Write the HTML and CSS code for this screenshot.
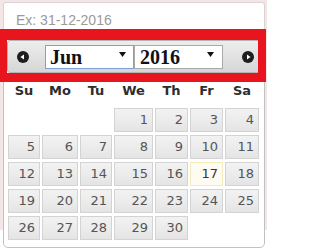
FILE: index.html
```html
<!DOCTYPE html>
<html>
<head>
<meta charset="utf-8">
<link rel="stylesheet" href="styles.css">
</head>
<body>
<div class="page">
  <div class="field"><span class="placeholder">Ex: 31-12-2016</span></div>
  <div class="datepicker">
    <div class="dp-header">
      <div class="nav prev">
        <svg width="12" height="12" viewBox="0 0 12 12"><circle cx="6" cy="6" r="6" fill="#1e1e1e"/><polygon points="3.4,6 7,3.4 7,8.6" fill="#fff"/></svg>
      </div>
      <div class="select focused"><span>Jun</span><svg class="caret" width="7" height="5" viewBox="0 0 7 5"><polygon points="0,0 7,0 3.5,5" fill="#111"/></svg></div>
      <div class="select"><span>2016</span><svg class="caret" width="7" height="5" viewBox="0 0 7 5"><polygon points="0,0 7,0 3.5,5" fill="#111"/></svg></div>
      <div class="nav next">
        <svg width="12" height="12" viewBox="0 0 12 12"><circle cx="6" cy="6" r="6" fill="#1e1e1e"/><polygon points="8.6,6 5,3.4 5,8.6" fill="#fff"/></svg>
      </div>
    </div>
    <div class="cal">
      <div class="dn">Su</div><div class="dn">Mo</div><div class="dn">Tu</div><div class="dn">We</div><div class="dn">Th</div><div class="dn">Fr</div><div class="dn">Sa</div>
      <div class="empty"></div><div class="empty"></div><div class="empty"></div>
      <div class="day">1</div><div class="day">2</div><div class="day">3</div><div class="day">4</div>
      <div class="day">5</div><div class="day">6</div><div class="day">7</div><div class="day">8</div><div class="day">9</div><div class="day">10</div><div class="day">11</div>
      <div class="day">12</div><div class="day">13</div><div class="day">14</div><div class="day">15</div><div class="day">16</div><div class="day today">17</div><div class="day">18</div>
      <div class="day">19</div><div class="day">20</div><div class="day">21</div><div class="day">22</div><div class="day">23</div><div class="day">24</div><div class="day">25</div>
      <div class="day">26</div><div class="day">27</div><div class="day">28</div><div class="day">29</div><div class="day">30</div><div class="empty"></div><div class="empty"></div>
    </div>
  </div>
</div>
<div class="annot"></div>
</body>
</html>
```
FILE: styles.css
```css
html {
  margin: 0;
  padding: 0;
  background: #ffffff;
}
body {
  margin: 0;
  padding: 0;
  width: 267px;
  height: 251px;
  overflow: hidden;
  background: linear-gradient(to bottom, #f4e6e6 0, #f4e6e6 230px, #ffffff 230px);
  font-family: "DejaVu Sans", Verdana, sans-serif;
}
.page {
  padding: 2px 0 0 3px;
  width: 262px;
}
.field {
  box-sizing: border-box;
  height: 34px;
  background: #fff;
  border: 1px solid #dcd4d4;
  border-bottom: none;
  border-radius: 3px 3px 0 0;
  padding: 7px 0 0 12px;
}
.placeholder {
  font-family: "Liberation Sans", Arial, sans-serif;
  font-size: 14px;
  color: #9a9a9a;
}
.datepicker {
  box-sizing: border-box;
  width: 262px;
  height: 212px;
  background: #fff;
  border: 1px solid #c2c2c2;
  border-radius: 0 0 5px 5px;
  padding: 3px 3px 5px 3px;
}
.dp-header {
  box-sizing: border-box;
  height: 33px;
  display: flex;
  align-items: center;
  border: 1px solid #b4b4b4;
  border-radius: 3px;
  background: linear-gradient(to bottom, #ededed 0%, #e2e2e2 50%, #d6d6d6 100%);
}
.nav {
  width: 30px;
  height: 31px;
  display: flex;
  align-items: center;
  justify-content: center;
}
.nav.prev {
  margin-right: 7px;
}
.nav.next {
  margin-left: auto;
  width: 24px;
}
.select {
  box-sizing: border-box;
  width: 89px;
  height: 24px;
  background: #fff;
  border: 1px solid #a9a9a9;
  display: flex;
  align-items: center;
  justify-content: space-between;
  padding: 0 8px 0 5px;
  font-family: "Liberation Serif", "Times New Roman", serif;
  font-weight: bold;
  font-size: 20px;
  line-height: 22px;
  color: #111;
}
.select.focused {
  border-color: #7f9fd6;
  padding-left: 4px;
  padding-right: 7px;
}
.caret {
  margin-bottom: 5px;
}
.cal {
  display: grid;
  grid-template-columns: 34px 38px 34px 41px 35px 35px 36px;
  grid-template-rows: 33px repeat(5, 27px);
}
.dn {
  display: flex;
  align-items: center;
  justify-content: center;
  font-weight: bold;
  font-size: 13px;
  color: #2e2e2e;
  padding-top: 1px;
}
.day {
  box-sizing: border-box;
  margin: 2px 1px 1px 1px;
  height: 24px;
  border: 1px solid #d3d3d3;
  background: linear-gradient(to bottom, #f2f2f2 0%, #ececec 50%, #e4e4e4 100%);
  color: #555;
  font-size: 13px;
  line-height: 22px;
  text-align: right;
  padding-right: 4px;
}
.day.today {
  border-color: #f4ebbd;
  background: #fefcf2;
  color: #363636;
}
.annot {
  position: absolute;
  left: 0;
  top: 29px;
  width: 266px;
  height: 53px;
  box-sizing: border-box;
  border-style: solid;
  border-color: #e8141e;
  border-width: 11px 8px 9px 7px;
}
```
